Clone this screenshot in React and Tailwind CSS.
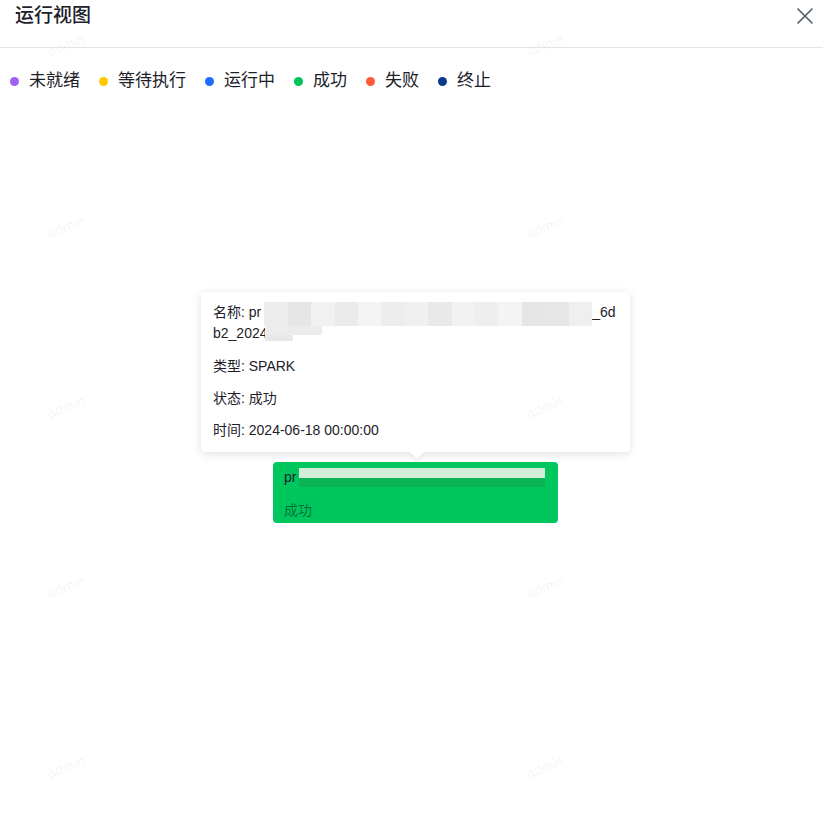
import React from "react";

const font = { fontFamily: '"Liberation Sans", "Noto Sans CJK SC", sans-serif' };

const legend = [
  { label: "未就绪", dot: "bg-[#a25ff7]" },
  { label: "等待执行", dot: "bg-[#ffc700]" },
  { label: "运行中", dot: "bg-[#1a6dff]" },
  { label: "成功", dot: "bg-[#00c35c]" },
  { label: "失败", dot: "bg-[#ff5a36]" },
  { label: "终止", dot: "bg-[#0a3a8e]" },
];

const marks = [
  [66, 45], [545, 45],
  [66, 227], [545, 227],
  [66, 407], [545, 407],
  [66, 587], [545, 587],
  [66, 767], [545, 767],
];

const blurTop = ["#ececec", "#e6e6e6", "#f1f1f1", "#eaeaea", "#f3f3f3", "#ededed", "#f0f0f0", "#e9e9e9", "#f2f2f2", "#eeeeee", "#f4f4f4", "#e5e5e5", "#e7e7e7", "#efefef"];

const App = () => {
  return (
    <div className="relative w-[823px] h-[824px] bg-white overflow-hidden text-[#1d2129]" style={font}>
      {/* header */}
      <div className="flex items-start justify-between h-[48px] border-b border-[#e3e4ea] pl-[15px] pr-[9px] pt-[4px]">
        <span className="text-[19px] leading-6 font-medium">运行视图</span>
        <svg className="mt-[3px]" width="18" height="18" viewBox="0 0 18 18" fill="none" stroke="#4e5969" strokeWidth="1.6" strokeLinecap="round">
          <path d="M2 2 L16 16 M16 2 L2 16" />
        </svg>
      </div>

      {/* legend */}
      <div className="flex items-center gap-[19px] pl-[10px] mt-[22px] h-[22px]">
        {legend.map((item) => (
          <div key={item.label} className="flex items-center gap-[10px]">
            <span className={`w-[9px] h-[9px] rounded-full ${item.dot}`}></span>
            <span className="text-[17px] leading-[22px]">{item.label}</span>
          </div>
        ))}
      </div>

      {/* canvas */}
      <div className="relative h-[732px]">
        {/* node */}
        <div className="absolute left-[273px] top-[370px] w-[285px] h-[61px] rounded-[4px] bg-[#00c65e] px-[11px] pt-[5px]">
          <div className="flex items-center h-[20px] text-[14px]">
            <span>pr</span>
            <div className="ml-[3px] w-[246px] h-[19px] mt-[1px] flex flex-col">
              <div className="h-[10px] bg-[#d3ecd9]"></div>
              <div className="h-[9px] bg-[#0bb354]"></div>
            </div>
          </div>
          <div className="mt-[13px] text-[14px] leading-5 text-black/45">成功</div>
        </div>

        {/* tooltip */}
        <div className="absolute left-[201px] top-[200px] w-[429px] h-[160px] bg-white rounded-[4px] shadow-[0_2px_10px_rgba(0,0,0,0.12)] px-[12px] pt-[10px] text-[14px] text-[#1d2129]">
          <div className="relative leading-[21px] whitespace-nowrap">
            <div className="flex items-center h-[21px]">
              <span>名称: pr</span>
              <div className="ml-[3px] flex h-[24px] w-[328px] mt-[3px]">
                {blurTop.map((c, i) => (
                  <div key={i} className="flex-1" style={{ backgroundColor: c }}></div>
                ))}
              </div>
              <span>_6d</span>
            </div>
            <div className="relative">
              <span>b2_2024</span>
              <div className="absolute left-[52px] top-[3px] w-[57px] h-[9px] bg-[#ececec]"></div>
              <div className="absolute left-[52px] top-[12px] w-[28px] h-[6px] bg-[#e8e8e8]"></div>
            </div>
          </div>
          <div className="mt-[12px] leading-[21px]">类型: SPARK</div>
          <div className="mt-[11px] leading-[21px]">状态: 成功</div>
          <div className="mt-[11px] leading-[21px]">时间: 2024-06-18 00:00:00</div>
          <div className="absolute left-[211px] bottom-[-5px] w-[10px] h-[10px] bg-white rotate-45 shadow-[2px_2px_4px_rgba(0,0,0,0.06)]"></div>
        </div>
      </div>

      {/* watermark */}
      {marks.map(([x, y], i) => (
        <span
          key={i}
          className="absolute text-[14px] leading-none text-black/[0.06] -rotate-[20deg] -translate-x-1/2 -translate-y-1/2 pointer-events-none"
          style={{ left: x, top: y }}
        >
          admin
        </span>
      ))}
    </div>
  );
};

export default App;
